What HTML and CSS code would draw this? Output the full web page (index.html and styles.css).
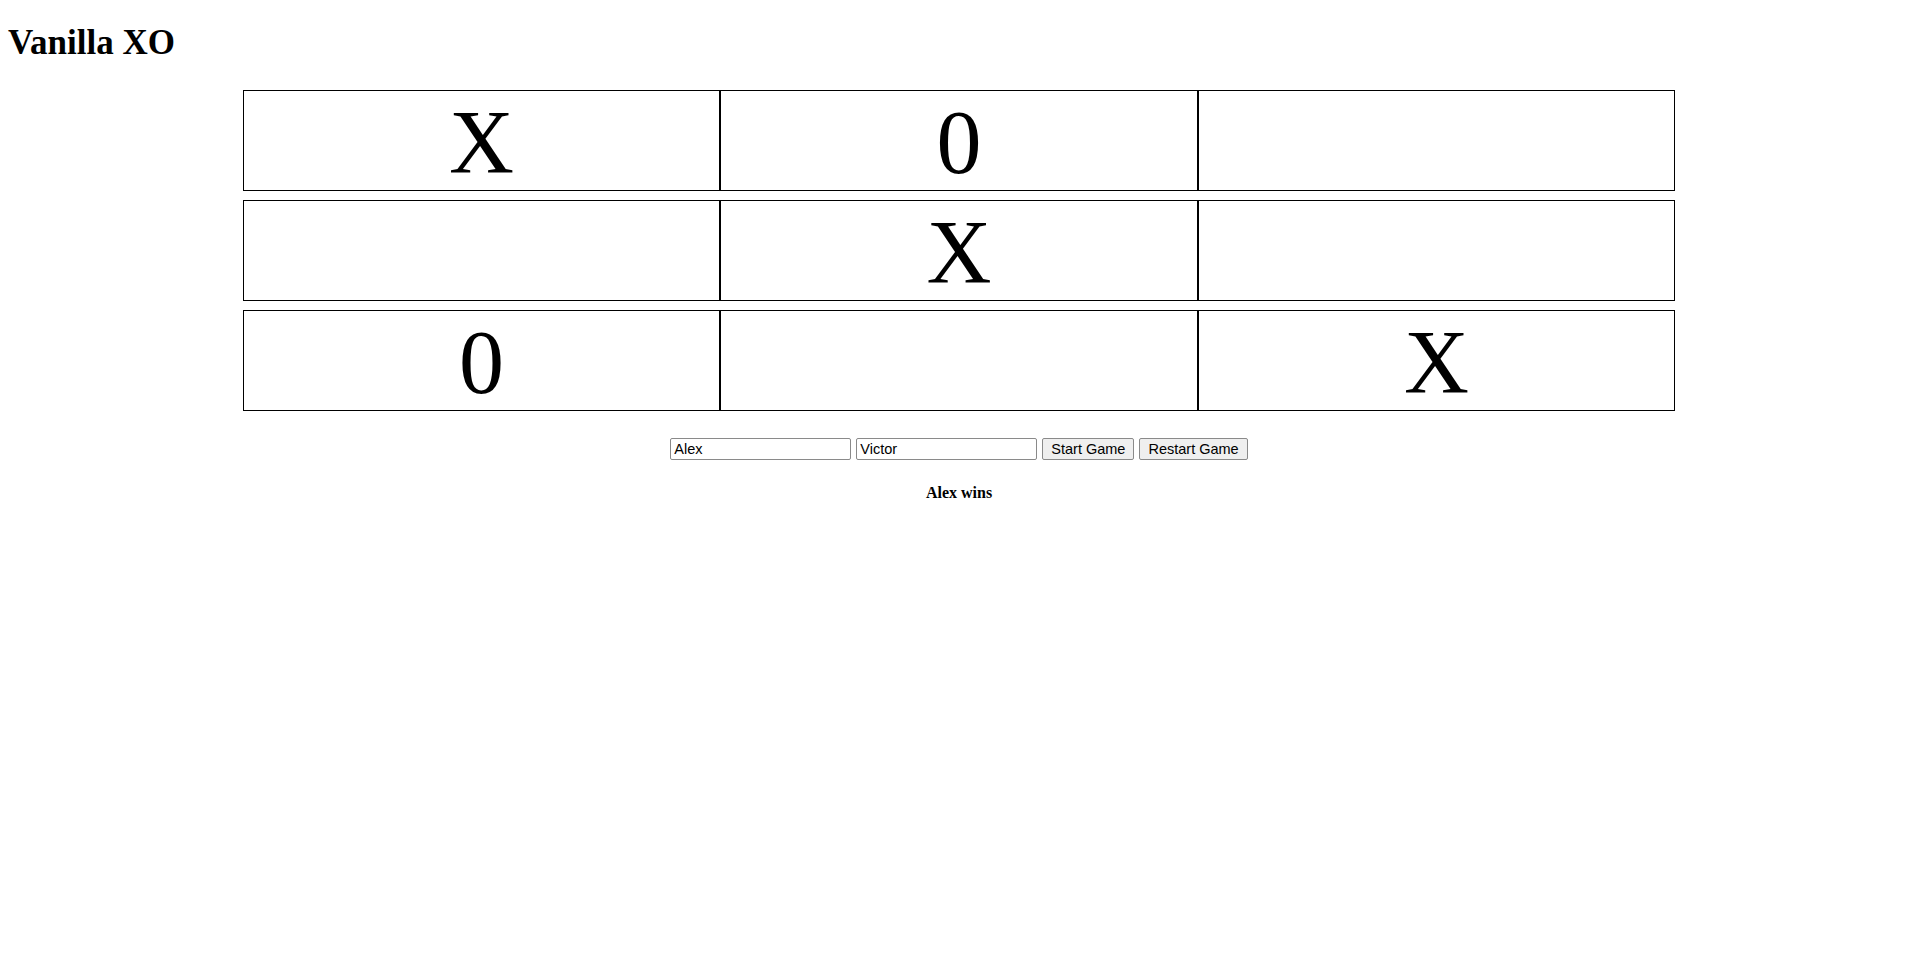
FILE: index.html
```html
<!DOCTYPE HTML>
<html>
<head>
<meta charset="utf-8">
<title>Vanilla XO</title>
<link rel="stylesheet" href="styles.css">
</head>

<body>
<h1 class="title">Vanilla XO</h1>
<div class="board">
	<div class="row">
		<div class="cell">X</div>
		<div class="cell">0</div>
		<div class="cell"></div>
	</div>
	<div class="row">
		<div class="cell"></div>
		<div class="cell">X</div>
		<div class="cell"></div>
	</div>
	<div class="row">
		<div class="cell">0</div>
		<div class="cell"></div>
		<div class="cell">X</div>
	</div>
</div>
<div class="controls">
	<input type="text" class="player" value="Alex">
	<input type="text" class="player" value="Victor">
	<button class="btn">Start Game</button>
	<button class="btn">Restart Game</button>
</div>
<div class="status">Alex wins</div>
</body>
</html>
```

FILE: styles.css
```css
body {
	margin: 0;
	padding: 8px;
	font-family: "Liberation Serif", "Times New Roman", serif;
	color: #000;
	background: #fff;
}
.title {
	margin: 15px 0 0 0;
	font-size: 35px;
	font-weight: bold;
}
.board {
	margin-top: 27px;
	display: flex;
	flex-direction: column;
	gap: 9px;
}
.row {
	display: flex;
	justify-content: center;
}
.cell {
	width: 25%;
	height: 99px;
	border: 1px solid #000;
	font-size: 90px;
	text-align: center;
	overflow: hidden;
}
.controls {
	margin-top: 27px;
	display: flex;
	justify-content: center;
	gap: 5px;
}
.player {
	width: 181px;
	height: 22px;
	box-sizing: border-box;
	margin: 0;
	padding: 0 3px;
	border: 1px solid #8a8a8a;
	border-radius: 2px;
	font-family: "Liberation Sans", Arial, sans-serif;
	font-size: 14.5px;
	color: #000;
}
.btn {
	height: 22px;
	box-sizing: border-box;
	margin: 0;
	padding: 0 8px;
	border: 1px solid #8a8a8a;
	border-radius: 2px;
	background: #efefef;
	font-family: "Liberation Sans", Arial, sans-serif;
	font-size: 14.5px;
	color: #000;
}
.status {
	margin-top: 24px;
	text-align: center;
	font-weight: bold;
	font-size: 16px;
}
```
